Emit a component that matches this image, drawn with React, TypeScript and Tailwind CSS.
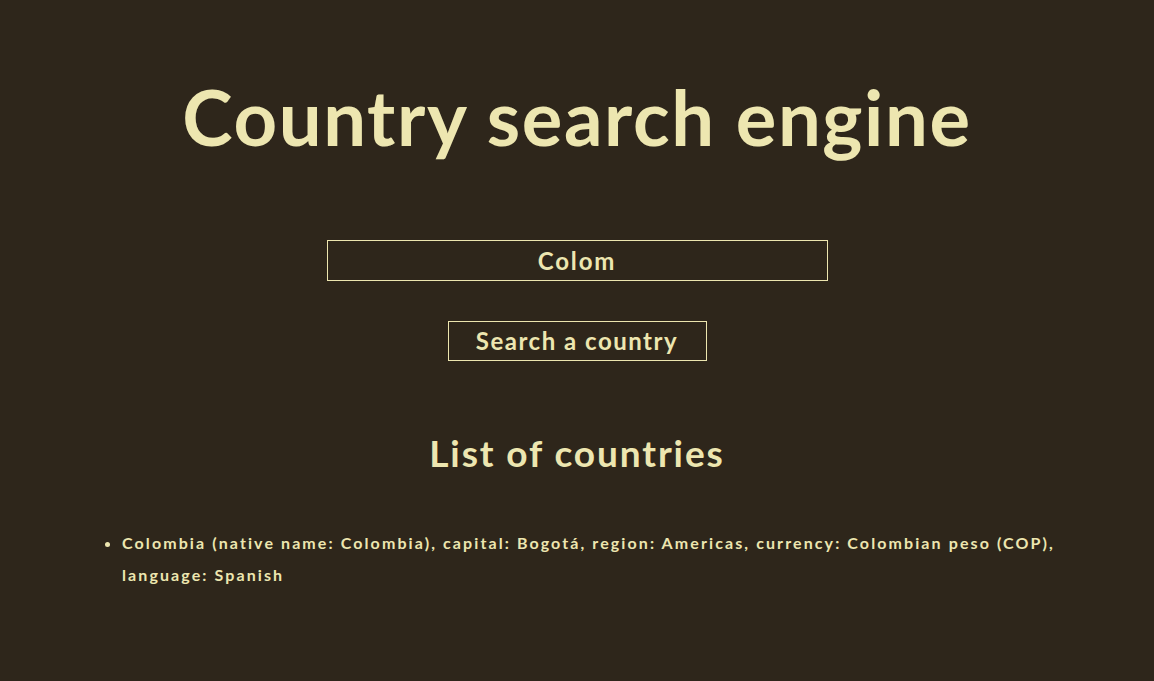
export default function App() {
  return (
    <div className="min-h-[681px] bg-[#2e261b] text-[#ede6b0] font-['Lato','Open_Sans',sans-serif] flex flex-col items-center">
      <h1 className="mt-[74px] text-[76px] leading-[86px] font-bold tracking-[1.6px]">Country search engine</h1>
      <input
        className="mt-[80px] w-[501px] h-[41px] border border-[#ede6b0] bg-transparent text-center text-[24px] font-bold tracking-[1.8px] outline-none"
        defaultValue="Colom"
      />
      <button className="mt-10 w-[259px] h-10 border border-[#ede6b0] text-[24px] font-bold tracking-[1.5px]">Search a country</button>
      <h2 className="mt-[70px] text-[37px] leading-[44px] font-bold tracking-[1.9px]">List of countries</h2>
      <ul className="mt-[52px] self-stretch px-[82px] pl-[122px] list-disc text-[16px] leading-8 font-bold tracking-[2.1px]">
        <li>
          Colombia (native name: Colombia), capital: Bogotá, region: Americas, currency: Colombian peso (COP), language: Spanish
        </li>
      </ul>
    </div>
  )
}
